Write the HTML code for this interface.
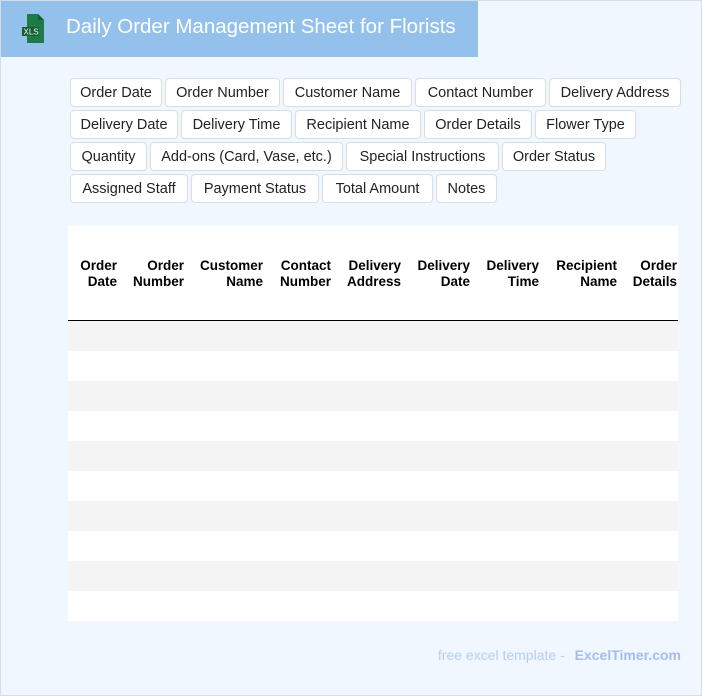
<!DOCTYPE html>
<html><head><meta charset="utf-8"><style>
*{box-sizing:border-box;margin:0;padding:0}
body{width:702px;height:696px;background:#f0f7ff;font-family:"Liberation Sans",sans-serif;position:relative;overflow:hidden}
.bd{position:absolute;left:0;top:0;width:702px;height:696px;border:1px solid #d6dde6;pointer-events:none}
.hdr{position:absolute;left:0;top:0;width:478px;height:57px;background:#93c1ec}
.hdr .t{position:absolute;left:66px;top:15px;color:#fff;font-size:20.5px}
.tags{position:absolute;left:70px;top:78px;width:620px}
.row{display:flex;gap:3px;margin-bottom:3px}
.tag{height:29px;background:#fff;border:1px solid #d8dee6;border-radius:4px;font-size:14.5px;color:#222;display:flex;align-items:center;justify-content:center;white-space:nowrap}
.tbl{position:absolute;left:68px;top:226px;width:610px;height:395px;background:#fff}
.th{position:absolute;top:0;height:95px;border-bottom:1px solid #000;width:610px}
.th div{position:absolute;top:32px;font-weight:bold;font-size:13.5px;text-align:right;line-height:16px;color:#000}
.r{position:absolute;left:0;width:610px;height:30px}
.ft{position:absolute;right:21px;top:647px;font-size:14px;color:#b7cdf0}
.ft b{color:#a4bcef;margin-left:6px}
</style></head><body>
<div class="hdr">
<svg style="position:absolute;left:20px;top:13px" width="32" height="32" viewBox="0 0 32 32"><path d="M7 1h11l6 6v23H7z" fill="#1e7b45"/><path d="M18 1v6h6z" fill="#145c32"/><rect x="2" y="14" width="17" height="9" fill="#145c32"/><text x="3.5" y="21.5" font-size="8" fill="#fff" font-family="Liberation Sans">XLS</text></svg>
<div class="t">Daily Order Management Sheet for Florists</div></div>
<div class="tags">
<div class="row"><div class="tag" style="width:92px">Order Date</div><div class="tag" style="width:115px">Order Number</div><div class="tag" style="width:129px">Customer Name</div><div class="tag" style="width:131px">Contact Number</div><div class="tag" style="width:132px">Delivery Address</div></div>
<div class="row"><div class="tag" style="width:108px">Delivery Date</div><div class="tag" style="width:111px">Delivery Time</div><div class="tag" style="width:126px">Recipient Name</div><div class="tag" style="width:108px">Order Details</div><div class="tag" style="width:101px">Flower Type</div></div>
<div class="row"><div class="tag" style="width:77px">Quantity</div><div class="tag" style="width:193px">Add-ons (Card, Vase, etc.)</div><div class="tag" style="width:153px">Special Instructions</div><div class="tag" style="width:104px">Order Status</div></div>
<div class="row"><div class="tag" style="width:118px">Assigned Staff</div><div class="tag" style="width:128px">Payment Status</div><div class="tag" style="width:111px">Total Amount</div><div class="tag" style="width:61px">Notes</div></div>
</div>
<div class="tbl">
<div class="th">
<div style="right:561px">Order<br>Date</div>
<div style="right:494px">Order<br>Number</div>
<div style="right:415px">Customer<br>Name</div>
<div style="right:347px">Contact<br>Number</div>
<div style="right:277px">Delivery<br>Address</div>
<div style="right:208px">Delivery<br>Date</div>
<div style="right:139px">Delivery<br>Time</div>
<div style="right:61px">Recipient<br>Name</div>
<div style="right:1px">Order<br>Details</div>
</div>
<div class="r" style="top:95px;background:#f4f4f4"></div>
<div class="r" style="top:155px;background:#f4f4f4"></div>
<div class="r" style="top:215px;background:#f4f4f4"></div>
<div class="r" style="top:275px;background:#f4f4f4"></div>
<div class="r" style="top:335px;background:#f4f4f4"></div>
</div>
<div class="ft">free excel template - <b>ExcelTimer.com</b></div>
<div class="bd"></div>
</body></html>
